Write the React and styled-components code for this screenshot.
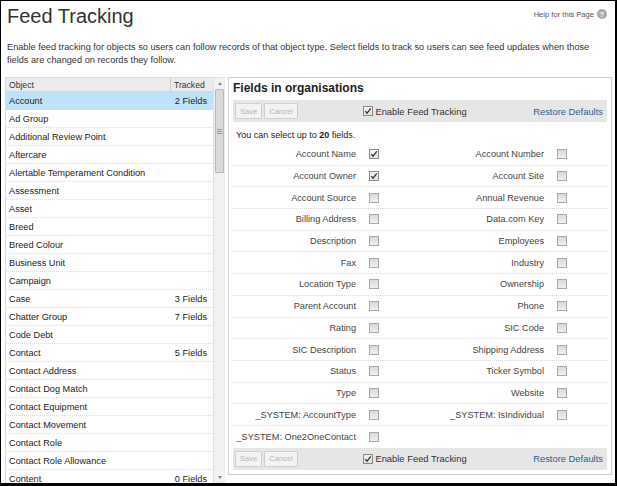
import React from 'react';
import styled, { createGlobalStyle } from 'styled-components';

const Global = createGlobalStyle`
  html, body { margin: 0; padding: 0; background: #fff; }
  body { font-family: "Liberation Sans", Arial, sans-serif; }
  * { box-sizing: border-box; }
`;

const Frame = styled.div`
  width: 617px;
  height: 486px;
  border: 1px solid #000;
  border-right-width: 2px;
  border-bottom-width: 3px;
  overflow: hidden;
  background: #fff;
  display: flex;
  flex-direction: column;
`;

const Header = styled.header`
  display: flex;
  justify-content: space-between;
  align-items: flex-start;
  padding: 3px 8px 0 6px;
`;

const Title = styled.h1`
  margin: 0;
  font-size: 20px;
  font-weight: normal;
  color: #333;
  line-height: 24px;
`;

const Help = styled.a`
  display: flex;
  align-items: center;
  gap: 3px;
  font-size: 7.6px;
  color: #555;
  margin-top: 5px;
  text-decoration: none;
`;

const HelpIcon = styled.span`
  width: 10px;
  height: 10px;
  border-radius: 50%;
  background: #a9a9a9;
  color: #fff;
  font-size: 7px;
  font-weight: bold;
  display: flex;
  align-items: center;
  justify-content: center;
`;

const Intro = styled.p`
  margin: 13px 8px 0 6px;
  font-size: 9.2px;
  line-height: 12.5px;
  color: #333;
`;

const Body = styled.div`
  display: flex;
  gap: 3px;
  padding: 0 3px 0 4px;
  margin-top: 11px;
  flex: 1;
  min-height: 0;
  align-items: flex-start;
`;

const LeftPanel = styled.div`
  width: 220px;
  display: flex;
  border-top: 1px solid #ddd;
  border-left: 1px solid #ddd;
  height: 406px;
  overflow: hidden;
`;

const ListCol = styled.div`
  flex: 1;
  display: flex;
  flex-direction: column;
`;

const ListHeader = styled.div`
  display: grid;
  grid-template-columns: 1fr 43px;
  height: 14px;
  flex: none;
  background: #ebebeb;
  border-bottom: 1px solid #d6d6d6;
  font-size: 8.6px;
  color: #333;
  align-items: center;
`;

const HeadCell = styled.div`
  padding: 0 3px;
  height: 100%;
  display: flex;
  align-items: center;
  border-left: ${p => (p.$divider ? '1px solid #d0d0d0' : 'none')};
`;

const Row = styled.div`
  display: flex;
  justify-content: space-between;
  align-items: center;
  height: 18px;
  flex: none;
  padding: 0 6px 0 3px;
  border-bottom: 1px dotted #dcdcdc;
  background: ${p => (p.$selected ? '#bee2f7' : '#fff')};
  font-size: 9.2px;
  color: #222;
  white-space: nowrap;
`;

const Scroll = styled.div`
  width: 12px;
  flex: none;
  background: #f1f1f1;
  border-left: 1px solid #e0e0e0;
  display: flex;
  flex-direction: column;
  align-items: center;
  padding-bottom: 4px;
`;

const Arrow = styled.div`
  width: 0;
  height: 0;
  border-left: 2.5px solid transparent;
  border-right: 2.5px solid transparent;
  ${p => (p.$down ? 'border-top: 3px solid #888;' : 'border-bottom: 3px solid #888;')}
  margin: ${p => (p.$down ? 'auto 0 0 0' : '4px 0 4px 0')};
`;

const Thumb = styled.div`
  width: 9px;
  height: 84px;
  background: #dadada;
  border: 1px solid #b9b9b9;
  border-radius: 1px;
  display: flex;
  flex-direction: column;
  justify-content: center;
  align-items: center;
  gap: 1px;
`;

const Grip = styled.span`
  width: 5px;
  height: 1px;
  background: #999;
`;

const RightPanel = styled.div`
  flex: 1;
  border: 1px solid #cfcfcf;
  padding: 0 4px 4px 4px;
  display: flex;
  flex-direction: column;
`;

const PanelTitle = styled.h2`
  margin: 3px 0 4px 0;
  font-size: 12px;
  line-height: 15px;
  font-weight: bold;
  color: #222;
`;

const Toolbar = styled.div`
  display: grid;
  grid-template-columns: 1fr auto 1fr;
  align-items: center;
  height: 22px;
  flex: none;
  background: #e6e6e6;
  padding: 0 4px 0 2px;
`;

const Buttons = styled.div`
  display: flex;
  gap: 2px;
`;

const Btn = styled.button`
  height: 16px;
  padding: 0 4px;
  font-family: inherit;
  font-size: 7.6px;
  color: #b5b5b5;
  background: #f3f3f3;
  border: 1px solid #cfcfcf;
  border-radius: 1px;
`;

const Enable = styled.label`
  display: flex;
  align-items: center;
  gap: 2px;
  font-size: 9.4px;
  color: #333;
  margin-left: -8px;
`;

const Restore = styled.a`
  justify-self: end;
  font-size: 9.4px;
  color: #2a5f94;
  text-decoration: none;
`;

const Hint = styled.div`
  font-size: 9px;
  color: #222;
  padding: 8px 0 0 3px;
  height: 22px;
  flex: none;
`;

const FieldRow = styled.div`
  display: grid;
  grid-template-columns: 126px 56px 132px 1fr;
  align-items: center;
  height: 21.7px;
  flex: none;
  border-bottom: ${p => (p.$last ? 'none' : '1px dotted #dadada')};
  font-size: 9.2px;
  color: #444;
`;

const Label = styled.span`
  text-align: right;
  padding-right: 3px;
  white-space: nowrap;
`;

const BoxCell = styled.span`
  padding-left: 10px;
  display: flex;
`;

const Box = styled.span`
  width: 10px;
  height: 10px;
  border: 1px solid ${p => (p.$checked ? '#8a8a8a' : '#a8a8a8')};
  background: ${p => (p.$checked ? 'linear-gradient(#f4f4f4, #e2e2e2)' : 'linear-gradient(#d9d9d9, #efefef)')};
  display: flex;
  align-items: center;
  justify-content: center;
`;

function Check({ checked }) {
  return (
    <Box $checked={checked}>
      {checked && (
        <svg width="8" height="8" viewBox="0 0 8 8">
          <path d="M1.3 4.2 L3 6.2 L6.8 1.3" fill="none" stroke="#333" strokeWidth="1.3" />
        </svg>
      )}
    </Box>
  );
}

const objects = [
  ['Account', '2 Fields'],
  ['Ad Group'],
  ['Additional Review Point'],
  ['Aftercare'],
  ['Alertable Temperament Condition'],
  ['Assessment'],
  ['Asset'],
  ['Breed'],
  ['Breed Colour'],
  ['Business Unit'],
  ['Campaign'],
  ['Case', '3 Fields'],
  ['Chatter Group', '7 Fields'],
  ['Code Debt'],
  ['Contact', '5 Fields'],
  ['Contact Address'],
  ['Contact Dog Match'],
  ['Contact Equipment'],
  ['Contact Movement'],
  ['Contact Role'],
  ['Contact Role Allowance'],
  ['Content', '0 Fields'],
];

const fields = [
  [['Account Name', true], ['Account Number']],
  [['Account Owner', true], ['Account Site']],
  [['Account Source'], ['Annual Revenue']],
  [['Billing Address'], ['Data.com Key']],
  [['Description'], ['Employees']],
  [['Fax'], ['Industry']],
  [['Location Type'], ['Ownership']],
  [['Parent Account'], ['Phone']],
  [['Rating'], ['SIC Code']],
  [['SIC Description'], ['Shipping Address']],
  [['Status'], ['Ticker Symbol']],
  [['Type'], ['Website']],
  [['_SYSTEM: AccountType'], ['_SYSTEM: IsIndividual']],
  [['_SYSTEM: One2OneContact'], null],
];

function Bar() {
  return (
    <Toolbar>
      <Buttons>
        <Btn disabled>Save</Btn>
        <Btn disabled>Cancel</Btn>
      </Buttons>
      <Enable>
        <Check checked />
        Enable Feed Tracking
      </Enable>
      <Restore href="#">Restore Defaults</Restore>
    </Toolbar>
  );
}

export default function App() {
  return (
    <>
      <Global />
      <Frame>
        <Header>
          <Title>Feed Tracking</Title>
          <Help href="#">
            Help for this Page <HelpIcon>?</HelpIcon>
          </Help>
        </Header>
        <Intro>
          Enable feed tracking for objects so users can follow records of that object type. Select fields to track so
          users can see feed updates when those fields are changed on records they follow.
        </Intro>
        <Body>
          <LeftPanel>
            <ListCol>
              <ListHeader>
                <HeadCell>Object</HeadCell>
                <HeadCell $divider>Tracked</HeadCell>
              </ListHeader>
              {objects.map(([name, count], i) => (
                <Row key={name} $selected={i === 0}>
                  <span>{name}</span>
                  <span>{count || ''}</span>
                </Row>
              ))}
            </ListCol>
            <Scroll>
              <Arrow />
              <Thumb>
                <Grip />
                <Grip />
                <Grip />
              </Thumb>
              <Arrow $down />
            </Scroll>
          </LeftPanel>
          <RightPanel>
            <PanelTitle>Fields in organisations</PanelTitle>
            <Bar />
            <Hint>
              You can select up to <b>20</b> fields.
            </Hint>
            {fields.map(([l, r], i) => (
              <FieldRow key={l[0]} $last={i === fields.length - 1}>
                <Label>{l[0]}</Label>
                <BoxCell>
                  <Check checked={!!l[1]} />
                </BoxCell>
                <Label>{r ? r[0] : ''}</Label>
                <BoxCell>{r && <Check checked={!!r[1]} />}</BoxCell>
              </FieldRow>
            ))}
            <Bar />
          </RightPanel>
        </Body>
      </Frame>
    </>
  );
}
